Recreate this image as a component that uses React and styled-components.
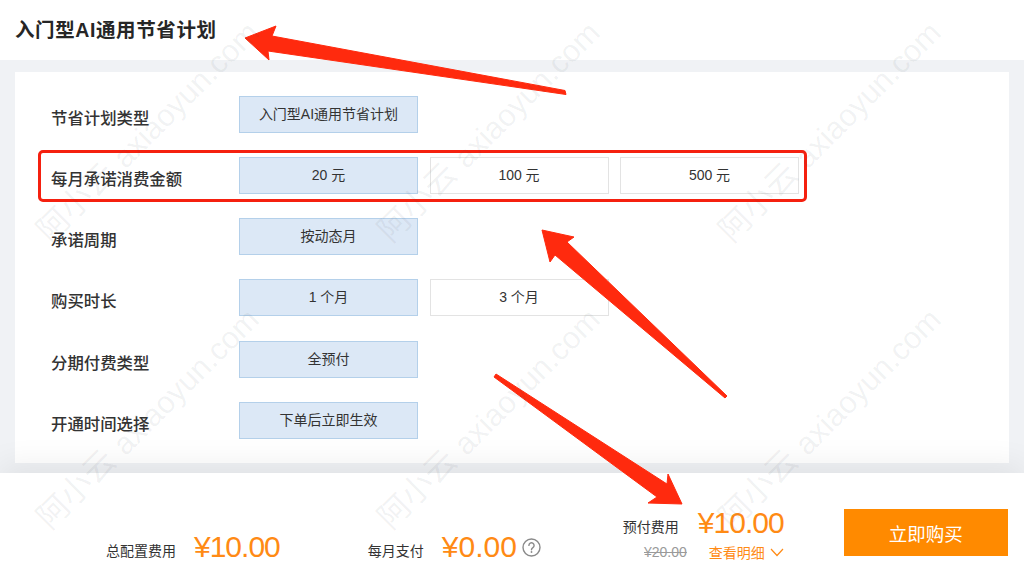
import React from 'react';
import styled, { createGlobalStyle } from 'styled-components';

const FONT = '"Liberation Sans", "Noto Sans CJK SC", sans-serif';

const Global = createGlobalStyle`
  html, body { margin: 0; padding: 0; background: #fff; }
  body { font-family: ${FONT}; }
  #root { width: 1024px; height: 577px; overflow: hidden; }
`;

const Page = styled.div`
  position: relative;
  width: 1024px;
  height: 577px;
  display: flex;
  flex-direction: column;
  background: #fff;
  overflow: hidden;
`;

const Header = styled.header`
  height: 60px;
  padding: 0 15px 3px;
  box-sizing: border-box;
  display: flex;
  align-items: center;
`;

const Title = styled.h1`
  margin: 0;
  font-size: 19.5px;
  font-weight: 700;
  letter-spacing: 0.6px;
  color: #262626;
`;

const Panel = styled.main`
  height: 413px;
  box-sizing: border-box;
  padding: 12px 15px 10px;
  background: #f0f2f5;
`;

const Card = styled.section`
  height: 100%;
  box-sizing: border-box;
  padding: 24px 0 0 36px;
  background: #fff;
  display: flex;
  flex-direction: column;
  gap: 24.15px;
`;

const Row = styled.div`
  display: flex;
  align-items: center;
  height: 37px;
`;

const Label = styled.div`
  width: 188px;
  padding-top: 5px;
  font-size: 16.4px;
  font-weight: 500;
  color: #333;
`;

const Options = styled.div`
  display: flex;
  gap: 11.5px;
`;

const Option = styled.div`
  width: 179px;
  height: 37px;
  box-sizing: border-box;
  display: flex;
  align-items: center;
  justify-content: center;
  padding-bottom: 3px;
  font-size: 14px;
  color: #333;
  background: ${p => (p.$active ? '#dce8f6' : '#fff')};
  border: 1px solid ${p => (p.$active ? '#b4d0ea' : '#e3e3e3')};
`;

const Footer = styled.footer`
  position: relative;
  flex: 1;
  box-sizing: border-box;
  padding: 0 16px 0 106px;
  background: #fff;
  box-shadow: 0 -8px 30px rgba(0, 0, 0, 0.07);
  display: flex;
  align-items: flex-start;
`;

const Summary = styled.div`
  flex: none;
  margin: 55px ${p => p.$after}px 0 0;
  display: flex;
  align-items: center;
  height: 38px;
`;

const SumLabel = styled.span`
  font-size: 14px;
  color: #333;
  margin-right: 18px;
  padding-top: 6px;
  white-space: nowrap;
`;

const Price = styled.span`
  font-size: 30px;
  line-height: 38px;
  letter-spacing: ${p => (p.$tight ? '-1px' : '0')};
  white-space: nowrap;
  color: #ff8a14;
`;

const Help = styled.svg`
  flex: none;
  width: 19px;
  height: 19px;
  margin-left: 5px;
  color: #8a8a8a;
`;

const Prepaid = styled.div`
  flex: none;
  margin: 31px 60px 0 0;
  width: 161px;
  display: grid;
  grid-template-columns: 64px 86px;
  column-gap: 11px;
  align-items: center;
`;

const PrepaidLabel = styled.span`
  font-size: 14px;
  color: #333;
  padding-top: 6px;
  white-space: nowrap;
`;

const OldPrice = styled.s`
  justify-self: end;
  font-size: 14px;
  color: #9a9a9a;
`;

const Detail = styled.span`
  justify-self: end;
  display: flex;
  align-items: center;
  gap: 5px;
  font-size: 14px;
  white-space: nowrap;
  color: #ff8a14;
`;

const BuyButton = styled.button`
  flex: none;
  width: 164px;
  height: 47px;
  margin-top: 36px;
  border: 0;
  padding: 0;
  background: #ff8a00;
  color: #fff;
  font-family: ${FONT};
  font-size: 18.5px;
`;

const Highlight = styled.div`
  position: absolute;
  left: 38px;
  top: 150px;
  width: 769px;
  height: 52px;
  box-sizing: border-box;
  border: 3px solid #f5200f;
  border-radius: 5px;
  pointer-events: none;
`;

const Arrows = styled.svg`
  position: absolute;
  inset: 0;
  width: 1024px;
  height: 577px;
  pointer-events: none;
`;

const Watermarks = styled.div`
  position: absolute;
  inset: 0;
  display: grid;
  grid-template-columns: repeat(3, 341px);
  grid-auto-rows: 287px;
  pointer-events: none;
`;

const Tile = styled.div`
  position: relative;
`;

const Mark = styled.span`
  position: absolute;
  left: ${p => p.$x}px;
  top: ${p => p.$y}px;
  transform: translate(-50%, -50%) rotate(-45deg);
  white-space: nowrap;
  color: rgba(60, 70, 80, 0.07);
  font-size: ${p => p.$size}px;
`;

const rows = [
  ['节省计划类型', ['入门型AI通用节省计划']],
  ['每月承诺消费金额', ['20 元', '100 元', '500 元']],
  ['承诺周期', ['按动态月']],
  ['购买时长', ['1 个月', '3 个月']],
  ['分期付费类型', ['全预付']],
  ['开通时间选择', ['下单后立即生效']],
];

export default function App() {
  return (
    <Page>
      <Global />
      <Header>
        <Title>入门型AI通用节省计划</Title>
      </Header>
      <Panel>
        <Card>
          {rows.map(([label, options]) => (
            <Row key={label}>
              <Label>{label}</Label>
              <Options>
                {options.map((o, i) => (
                  <Option key={o} $active={i === 0}>{o}</Option>
                ))}
              </Options>
            </Row>
          ))}
        </Card>
      </Panel>
      <Footer>
        <Summary $after={88}>
          <SumLabel>总配置费用</SumLabel>
          <Price $tight>¥10.00</Price>
        </Summary>
        <Summary $after={82}>
          <SumLabel>每月支付</SumLabel>
          <Price>¥0.00</Price>
          <Help viewBox="0 0 19 19" fill="none" stroke="currentColor">
            <circle cx="9.5" cy="9.5" r="8.5" strokeWidth="1.4" />
            <path d="M6.9 7.4a2.6 2.6 0 1 1 4 2.2c-.9.6-1.4 1-1.4 2.1" strokeWidth="1.4" strokeLinecap="round" />
            <circle cx="9.5" cy="14" r=".9" fill="currentColor" stroke="none" />
          </Help>
        </Summary>
        <Prepaid>
          <PrepaidLabel>预付费用</PrepaidLabel>
          <Price $tight>¥10.00</Price>
          <OldPrice>¥20.00</OldPrice>
          <Detail>
            查看明细
            <svg width="14" height="9" viewBox="0 0 14 9" fill="none" stroke="currentColor" strokeWidth="1.2">
              <path d="M1 1l6 6.5L13 1" />
            </svg>
          </Detail>
        </Prepaid>
        <BuyButton>立即购买</BuyButton>
      </Footer>
      <Highlight />
      <Arrows viewBox="0 0 1024 577" fill="#ff2a0e" stroke="#ff2a0e" strokeWidth="1" strokeLinejoin="round">
        <path d="M245 38 276 26 272 36 565 90.500 566 94.500 268 51 269 60Z" />
        <path d="M542 230 574 237 567 242 727 396 725 398 555 255 550 262Z" />
        <path d="M682 504 668 474 667 484 496 374 494 377 657 497 648 503Z" />
      </Arrows>
      <Watermarks>
        {Array.from({ length: 6 }).map((_, i) => (
          <Tile key={i}>
            <Mark $x={186} $y={95} $size={31}>axiaoyun.com</Mark>
            <Mark $x={74} $y={200} $size={32}>阿小云</Mark>
          </Tile>
        ))}
      </Watermarks>
    </Page>
  );
}
